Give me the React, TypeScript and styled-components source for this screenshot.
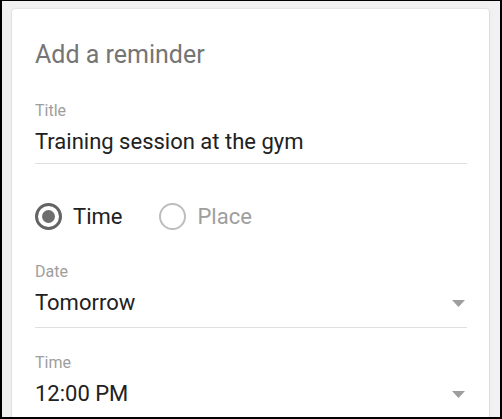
import React from "react";
import styled, { createGlobalStyle } from "styled-components";

const GlobalStyle = createGlobalStyle`
  html, body { margin: 0; padding: 0; height: 100%; }
  body { font-family: Roboto, "Noto Sans", "Liberation Sans", sans-serif; }
  #root { height: 100%; }
`;

const Frame = styled.div`
  box-sizing: border-box;
  height: 100vh;
  overflow: hidden;
  background: #f1f1f1;
  border-style: solid;
  border-color: #000;
  border-width: 1px 2px 2px 2px;
  padding: 8px 11px 0 10px;
  display: flex;
  flex-direction: column;
`;

const Card = styled.div`
  flex: 1;
  background: #fff;
  border-radius: 3px 3px 0 0;
  box-shadow: 0 0 2px rgba(0, 0, 0, 0.18), 0 1px 2px rgba(0, 0, 0, 0.1);
  padding: 32px 22px 0 23px;
  display: flex;
  flex-direction: column;
`;

const Heading = styled.h1`
  margin: 0;
  font-size: 25px;
  line-height: 28px;
  font-weight: 400;
  color: #757575;
`;

const Field = styled.div<{ $top: number }>`
  margin-top: ${(p) => p.$top}px;
  display: flex;
  flex-direction: column;
`;

const Label = styled.div`
  font-size: 16px;
  line-height: 20px;
  color: #9e9e9e;
`;

const Value = styled.div<{ $gap: number; $pad: number }>`
  margin-top: ${(p) => p.$gap}px;
  font-size: 22px;
  line-height: 26px;
  color: #212121;
  padding-bottom: ${(p) => p.$pad}px;
  border-bottom: 1px solid #e0e0e0;
  display: flex;
  align-items: center;
  justify-content: space-between;
`;

const Arrow = styled.svg`
  width: 13px;
  height: 7px;
  margin-right: 2px;
  flex: none;
`;

const RadioRow = styled.div`
  margin-top: 39px;
  display: flex;
  align-items: center;
  gap: 37px;
`;

const RadioOption = styled.label`
  display: flex;
  align-items: center;
  gap: 11px;
  font-size: 22px;
  line-height: 27px;
`;

const RadioCircle = styled.span<{ $checked: boolean }>`
  box-sizing: border-box;
  width: 27px;
  height: 27px;
  border-radius: 50%;
  border: ${(p) => (p.$checked ? "3px solid #646464" : "2.5px solid #bdbdbd")};
  display: flex;
  align-items: center;
  justify-content: center;
  &::after {
    content: "";
    display: ${(p) => (p.$checked ? "block" : "none")};
    width: 13px;
    height: 13px;
    border-radius: 50%;
    background: #6e6e6e;
  }
`;

const RadioText = styled.span<{ $checked: boolean }>`
  color: ${(p) => (p.$checked ? "#212121" : "#9e9e9e")};
`;

const DropArrow = () => (
  <Arrow viewBox="0 0 13 7">
    <polygon points="0,0 13,0 6.5,7" fill="#9e9e9e" />
  </Arrow>
);

export default function App() {
  return (
    <>
      <GlobalStyle />
      <Frame>
        <Card>
          <Heading>Add a reminder</Heading>
          <Field $top={32}>
            <Label>Title</Label>
            <Value $gap={8} $pad={8}>Training session at the gym</Value>
          </Field>
          <RadioRow>
            <RadioOption>
              <RadioCircle $checked />
              <RadioText $checked>Time</RadioText>
            </RadioOption>
            <RadioOption>
              <RadioCircle $checked={false} />
              <RadioText $checked={false}>Place</RadioText>
            </RadioOption>
          </RadioRow>
          <Field $top={32}>
            <Label>Date</Label>
            <Value $gap={8} $pad={11}>
              <span>Tomorrow</span>
              <DropArrow />
            </Value>
          </Field>
          <Field $top={25}>
            <Label>Time</Label>
            <Value $gap={8} $pad={11}>
              <span>12:00 PM</span>
              <DropArrow />
            </Value>
          </Field>
        </Card>
      </Frame>
    </>
  );
}
